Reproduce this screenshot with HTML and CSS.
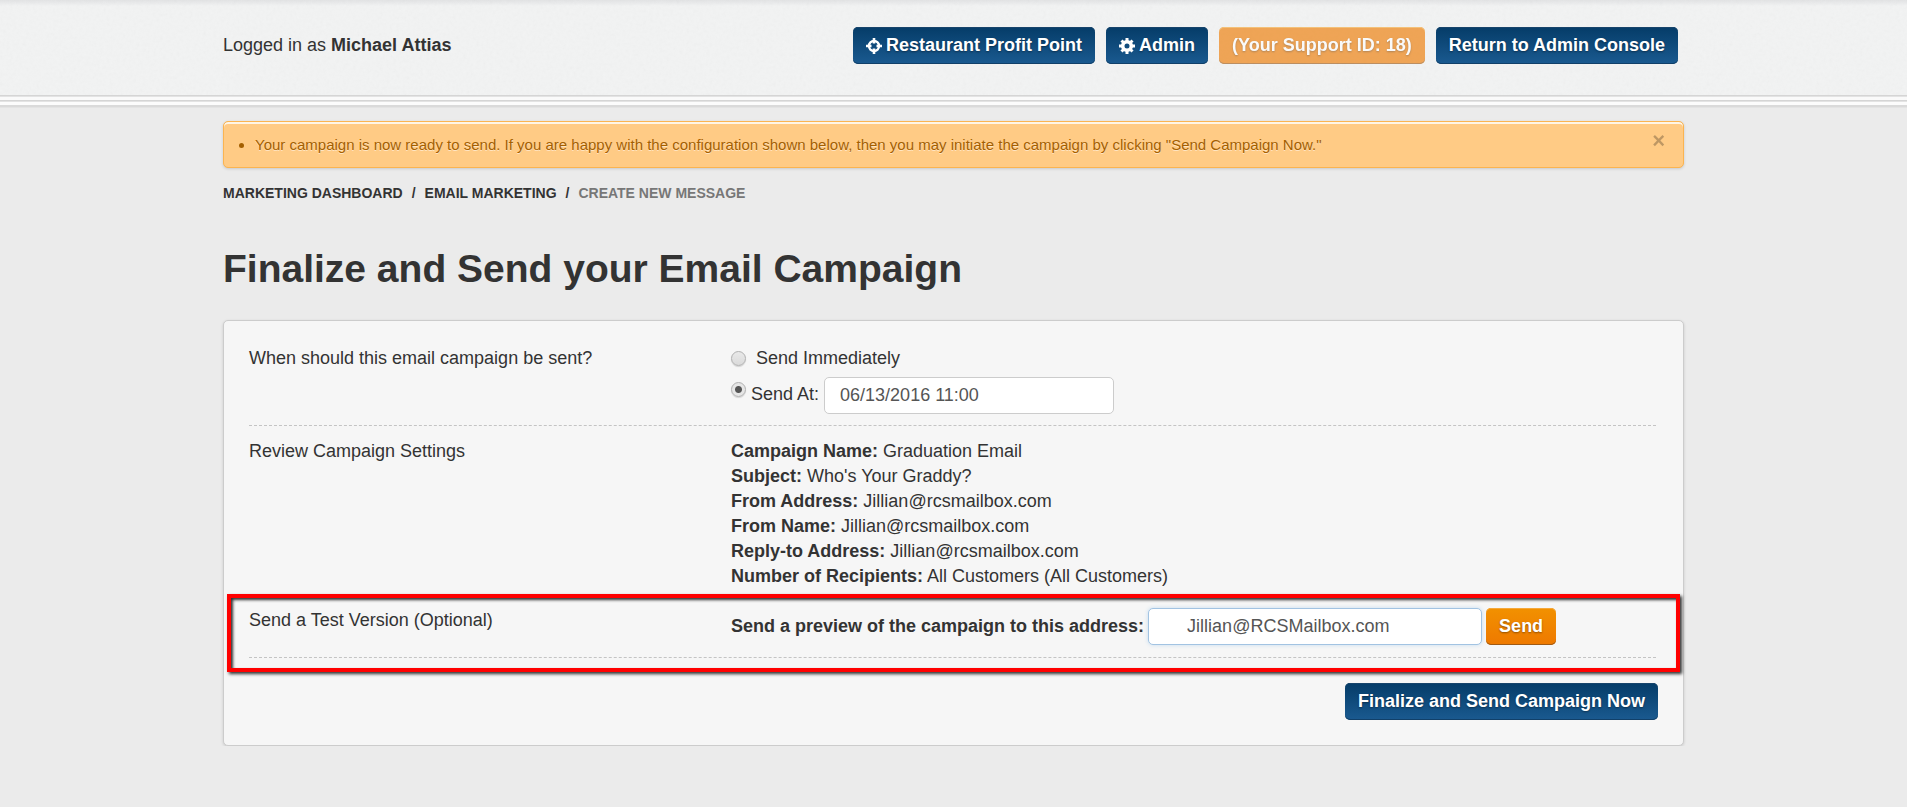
FILE: index.html
```html
<!DOCTYPE html>
<html lang="en">
<head>
    <meta charset="UTF-8">
    <meta name="viewport" content="width=device-width, initial-scale=1.0">
    <title>Finalize and Send your Email Campaign</title>
    <link rel="stylesheet" href="styles.css">
</head>
<body>
    <header class="header">
        <svg class="paper" aria-hidden="true">
            <filter id="grain">
                <feTurbulence type="fractalNoise" baseFrequency="0.3" numOctaves="2"/>
                <feColorMatrix type="saturate" values="0"/>
            </filter>
            <rect width="100%" height="100%" filter="url(#grain)"/>
        </svg>
        <div class="container header-inner">
            <p class="user">Logged in as <strong>Michael Attias</strong></p>
            <nav class="header-nav">
                <a href="#" class="btn btn-primary">
                    <svg class="icon" viewBox="0 0 16 16" aria-hidden="true">
                        <circle cx="8" cy="8" r="5" fill="none" stroke="currentColor" stroke-width="2.400"/>
                        <path d="M8 0v5.500M8 10.500v5.500M0 8h5.500M10.500 8h5.500" stroke="currentColor" stroke-width="2.600"/>
                    </svg>
                    Restaurant Profit Point
                </a>
                <a href="#" class="btn btn-primary">
                    <svg class="icon" viewBox="0 0 16 16" aria-hidden="true">
                        <circle cx="8" cy="8" r="4.300" fill="none" stroke="currentColor" stroke-width="3.600"/>
                        <path d="M8 0v3M8 13v3M0 8h3M13 8h3M2.500 2.500l2 2M11.500 11.500l2 2M13.500 2.500l-2 2M4.500 11.500l-2 2" stroke="currentColor" stroke-width="3"/>
                    </svg>
                    Admin
                </a>
                <a href="#" class="btn btn-warning btn-disabled">(Your Support ID: 18)</a>
                <a href="#" class="btn btn-primary">Return to Admin Console</a>
            </nav>
        </div>
    </header>

    <main class="container">
        <div class="alert">
            <ul>
                <li>Your campaign is now ready to send. If you are happy with the configuration shown below, then you may initiate the campaign by clicking "Send Campaign Now."</li>
            </ul>
            <button type="button" class="close" aria-label="Close">×</button>
        </div>

        <nav class="breadcrumb">
            <a href="#">MARKETING DASHBOARD</a>
            <span>/</span>
            <a href="#">EMAIL MARKETING</a>
            <span>/</span>
            <span class="active">CREATE NEW MESSAGE</span>
        </nav>

        <h1>Finalize and Send your Email Campaign</h1>

        <form class="panel">
            <div class="row row-schedule">
                <div class="row-label">When should this email campaign be sent?</div>
                <div class="row-body">
                    <div class="option">
                        <input type="radio" name="when" id="sendNow">
                        <label for="sendNow">Send Immediately</label>
                    </div>
                    <div class="option option-date">
                        <input type="radio" name="when" id="sendAt" checked>
                        <label for="sendAt">Send At:</label>
                        <input type="text" class="field" id="sendDate" aria-label="Send date" value="06/13/2016 11:00">
                    </div>
                </div>
            </div>

            <div class="row row-review">
                <div class="row-label">Review Campaign Settings</div>
                <div class="row-body">
                    <p><strong>Campaign Name:</strong> Graduation Email</p>
                    <p><strong>Subject:</strong> Who's Your Graddy?</p>
                    <p><strong>From Address:</strong> Jillian@rcsmailbox.com</p>
                    <p><strong>From Name:</strong> Jillian@rcsmailbox.com</p>
                    <p><strong>Reply-to Address:</strong> Jillian@rcsmailbox.com</p>
                    <p><strong>Number of Recipients:</strong> All Customers (All Customers)</p>
                </div>
            </div>

            <div class="highlight">
                <div class="row row-test">
                    <div class="row-label">Send a Test Version (Optional)</div>
                    <div class="row-body preview">
                        <label for="previewEmail">Send a preview of the campaign to this address:</label>
                        <input type="text" class="field field-email" id="previewEmail" value="Jillian@RCSMailbox.com">
                        <button type="button" class="btn btn-warning">Send</button>
                    </div>
                </div>
            </div>

            <div class="actions">
                <button type="submit" class="btn btn-primary">Finalize and Send Campaign Now</button>
            </div>
        </form>
    </main>
</body>
</html>
```
FILE: styles.css
```css
* {
    box-sizing: border-box;
}
body {
    margin: 0;
    background: #ebebeb;
    color: #333;
    font-family: "Liberation Sans", Arial, sans-serif;
    font-size: 18px;
    line-height: 25px;
}
p, ul {
    margin: 0;
}
.container {
    max-width: 1461px;
    margin: 0 auto;
}

/* header */
.header {
    position: relative;
    background: linear-gradient(#e2e3e4, #f2f3f3 6px);
    padding: 27px 0 31px;
    box-shadow: 0 1px #d5d5d5, 0 2px #e3e3e3, 0 5px #fafafa, 0 6px #d5d5d5, 0 7px #e3e3e3, 0 10px #fcfcfc, 0 12px #dadada, 0 13px #e3e3e3;
}
.paper {
    position: absolute;
    top: 0;
    left: 0;
    width: 100%;
    height: 100%;
    opacity: 0.05;
}
.header-inner {
    position: relative;
    display: flex;
    justify-content: space-between;
    align-items: flex-start;
    padding-right: 6px;
}
.user {
    padding-top: 6px;
}
.header-nav {
    display: flex;
    gap: 11px;
}

/* buttons */
.btn {
    display: inline-flex;
    align-items: center;
    gap: 4px;
    height: 37px;
    padding: 0 13px;
    border: 0;
    border-radius: 5px;
    color: #fff;
    font-family: inherit;
    font-size: 18px;
    font-weight: bold;
    text-decoration: none;
    white-space: nowrap;
    text-shadow: 0 1px 2px rgba(0,0,0,0.4);
}
.btn-primary {
    background: linear-gradient(#053c68, #1a5a90);
    box-shadow: inset 0 1px #17446b, inset 0 -1px #114069;
}
.btn-warning {
    background: linear-gradient(#f29100, #ee7900);
    box-shadow: inset 0 1px #f5a83a, inset 0 -1px #a05a14;
}
.btn-disabled {
    background: #ee7b03;
    opacity: 0.65;
}
.icon {
    width: 16px;
    height: 16px;
}

/* notice */
.alert {
    display: flex;
    justify-content: space-between;
    align-items: flex-start;
    margin-top: 26px;
    padding: 10px 18px 10px 15px;
    background: #ffcb85;
    border: 1px solid #fbb450;
    border-radius: 5px;
    box-shadow: 0 1px 3px rgba(0,0,0,0.15), inset 0 2px #fff5e6;
    color: #a45f00;
    font-size: 15px;
    text-shadow: 0 1px rgba(255,255,255,0.5);
}
.alert ul {
    padding-left: 16px;
}
.close {
    padding: 0;
    border: 0;
    background: none;
    color: #000;
    opacity: 0.25;
    font-family: inherit;
    font-size: 22px;
    font-weight: bold;
    line-height: 18px;
}

.breadcrumb {
    display: flex;
    gap: 9px;
    margin-top: 13px;
    font-size: 14px;
    font-weight: bold;
}
.breadcrumb a {
    color: #333;
    text-decoration: none;
}
.breadcrumb .active {
    color: #777;
}
h1 {
    margin: 36px 0 24px;
    font-size: 39px;
    line-height: 54px;
}

/* campaign form */
.panel {
    padding: 0 25px 25px;
    background: #f6f6f6;
    border: 1px solid #ccc;
    border-radius: 5px;
    box-shadow: 0 1px 3px rgba(0,0,0,0.15);
}
.row {
    display: grid;
    grid-template-columns: 482px 1fr;
    margin-right: 2px;
    border-bottom: 1px dashed #c4c4c4;
}
.row-schedule {
    padding: 25px 0 11px;
}
.row-review {
    padding: 13px 0 5px;
    border-bottom: 0;
}
.option {
    display: flex;
    align-items: center;
    gap: 10px;
}
.option-date {
    align-items: flex-start;
    gap: 5px;
    margin-top: 6px;
}
.option-date label {
    padding-top: 5px;
}
input[type="radio"] {
    appearance: none;
    width: 15px;
    height: 15px;
    margin: 0;
    border: 1px solid #b0b0b0;
    border-radius: 50%;
    background: linear-gradient(#e9e9e9, #dadada);
    box-shadow: 0 1px 1px rgba(0,0,0,0.15);
}
.option-date input[type="radio"] {
    margin-top: 5px;
}
input[type="radio"]:checked {
    background: radial-gradient(circle, #555 3px, #e6e6e6 4px);
}
.field {
    width: 290px;
    height: 37px;
    padding: 0 15px;
    border: 1px solid #ccc;
    border-radius: 5px;
    background: #fff;
    color: #555;
    font-family: inherit;
    font-size: 18px;
}
.field-email {
    width: 334px;
    padding-left: 38px;
    border-color: #a2c3e2;
    box-shadow: 0 0 4px #c5dcf0;
}
.highlight {
    margin: 0 -22px;
    padding: 10px 18px 10px;
    border: 4px solid #f00;
    box-shadow: 2px 2px 3px rgba(0,0,0,0.8), inset 2px 2px 3px rgba(0,0,0,0.8);
}
.row-test {
    padding-bottom: 12px;
}
.preview {
    display: flex;
    align-items: center;
    gap: 4px;
}
.preview label {
    font-weight: bold;
}
.actions {
    display: flex;
    justify-content: flex-end;
    margin-top: 11px;
}
```
